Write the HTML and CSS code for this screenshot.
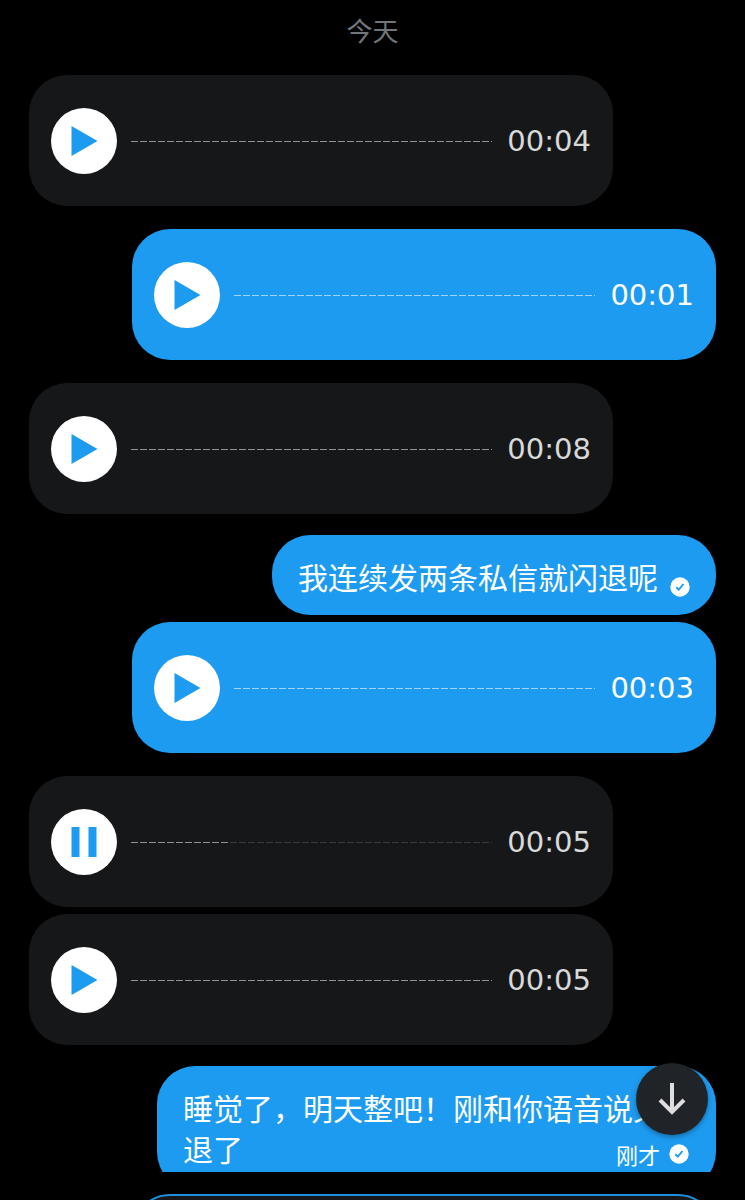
FILE: index.html
```html
<!DOCTYPE html>
<html lang="zh-CN">
<head>
<meta charset="utf-8">
<meta name="viewport" content="width=device-width, initial-scale=1">
<title>私信</title>
<link rel="stylesheet" href="styles.css">
</head>
<body>
<svg class="symbols" aria-hidden="true">
  <symbol id="play" viewBox="0 0 66 66"><path d="M20.500 18L46.500 33L20.500 48Z" fill="#1d9bf0"/></symbol>
  <symbol id="pause" viewBox="0 0 66 66"><path d="M20.500 18h8v30h-8zM37.500 18h8v30h-8z" fill="#1d9bf0"/></symbol>
  <symbol id="sent" viewBox="0 0 20 20"><circle cx="10" cy="10" r="9.700" fill="#fff"/><path d="M6.300 10.300L8.800 12.700L13.500 7" fill="none" stroke="#1d9bf0" stroke-width="1.900"/></symbol>
</svg>
<main class="chat">
  <h1 class="day">今天</h1>
  <article class="voice received">
    <button class="toggle" type="button" aria-label="播放"><svg><use href="#play"/></svg></button>
    <div class="track"></div>
    <time class="length">00:04</time>
  </article>
  <article class="voice sent spaced">
    <button class="toggle" type="button" aria-label="播放"><svg><use href="#play"/></svg></button>
    <div class="track"></div>
    <time class="length">00:01</time>
  </article>
  <article class="voice received spaced">
    <button class="toggle" type="button" aria-label="播放"><svg><use href="#play"/></svg></button>
    <div class="track"></div>
    <time class="length">00:08</time>
  </article>
  <article class="message short sent after-voice">
    <p class="text">我连续发两条私信就闪退呢</p>
    <svg class="tick" role="img" aria-label="已发送"><use href="#sent"/></svg>
  </article>
  <article class="voice sent">
    <button class="toggle" type="button" aria-label="播放"><svg><use href="#play"/></svg></button>
    <div class="track"></div>
    <time class="length">00:03</time>
  </article>
  <article class="voice received spaced">
    <button class="toggle" type="button" aria-label="暂停"><svg><use href="#pause"/></svg></button>
    <div class="track"><div class="rest"></div></div>
    <time class="length">00:05</time>
  </article>
  <article class="voice received">
    <button class="toggle" type="button" aria-label="播放"><svg><use href="#play"/></svg></button>
    <div class="track"></div>
    <time class="length">00:05</time>
  </article>
  <div class="clip after-voice">
    <article class="message long sent">
      <p class="text">睡觉了，明天整吧！刚和你语音说又闪退了<span class="status"><span>刚才</span><svg class="tick" role="img" aria-label="已发送"><use href="#sent"/></svg></span></p>
    </article>
    <button class="latest" type="button" aria-label="最新消息"><svg viewBox="0 0 72 72"><path d="M36 20V48M24 37L36 49L48 37" fill="none" stroke="#dedede" stroke-width="4"/></svg></button>
  </div>
  <div class="composer"></div>
</main>
</body>
</html>
```
FILE: styles.css
```css
* { box-sizing: border-box; }

body {
  margin: 0;
  background: #000;
  color: #fff;
  font-family: "Noto Sans CJK SC", sans-serif;
}

.symbols { position: absolute; width: 0; height: 0; }

.chat {
  display: flex;
  flex-direction: column;
  gap: 7px;
  height: 100vh;
  overflow: hidden;
  padding: 10px 29px 0;
}

.chat > * { flex-shrink: 0; }

.day {
  margin: 0 0 18px;
  color: #71767b;
  font-size: 26px;
  font-weight: 400;
  line-height: 40px;
  text-align: center;
}

.voice {
  display: flex;
  align-items: center;
  width: 85%;
  padding: 33px 22px 32px;
  border-radius: 38px;
}

.received { align-self: flex-start; background: #161719; color: #d9d9d9; }
.sent { align-self: flex-end; background: #1d9bf0; color: #fff; }
.spaced { margin-top: 16px; }
.after-voice { margin-top: 14px; }

.toggle {
  width: 66px;
  height: 66px;
  margin-right: 14px;
  padding: 0;
  border: 0;
  border-radius: 50%;
  background: #fff;
}

.toggle svg { display: block; width: 66px; height: 66px; }

.track {
  display: flex;
  justify-content: flex-end;
  flex: 1;
  height: 1px;
  margin-right: 15px;
  background: repeating-linear-gradient(90deg, #919293 0 7px, transparent 7px 9px);
}

.sent .track { background: repeating-linear-gradient(90deg, #a2d5f8 0 7px, transparent 7px 9px); }

.rest { width: 73%; background: #161719b3; }

.length {
  font-family: "DejaVu Sans", sans-serif;
  font-size: 29px;
  line-height: 40px;
}

.message { border-radius: 38px; }
.short { display: flex; align-items: center; gap: 12px; padding: 21px 26px 18px; }
.text { margin: 0; font-size: 30px; line-height: 41px; }
.tick { display: block; width: 20px; height: 20px; }
.short .tick { align-self: flex-end; }

.clip {
  position: relative;
  display: flex;
  justify-content: flex-end;
  height: 106px;
  clip-path: inset(-4px 0 0 0);
}

.long {
  align-self: flex-start;
  width: 559px;
  max-width: 100%;
  padding: 21px 20px 20px 26px;
}

.status {
  display: flex;
  float: right;
  align-items: center;
  gap: 9px;
  margin-top: 10px;
  padding-right: 7px;
  font-size: 22px;
  line-height: 32px;
}

.latest {
  position: absolute;
  top: -3px;
  right: 8px;
  width: 72px;
  height: 72px;
  padding: 0;
  border: 0;
  border-radius: 50%;
  background: #202327;
  box-shadow: 0 2px 5px #0005;
}

.latest svg { display: block; }

.composer {
  width: 85%;
  height: 80px;
  margin-top: 15px;
  align-self: flex-end;
  border: 2px solid #1d8fdc;
  border-radius: 38px;
  background: #161719;
}
```
